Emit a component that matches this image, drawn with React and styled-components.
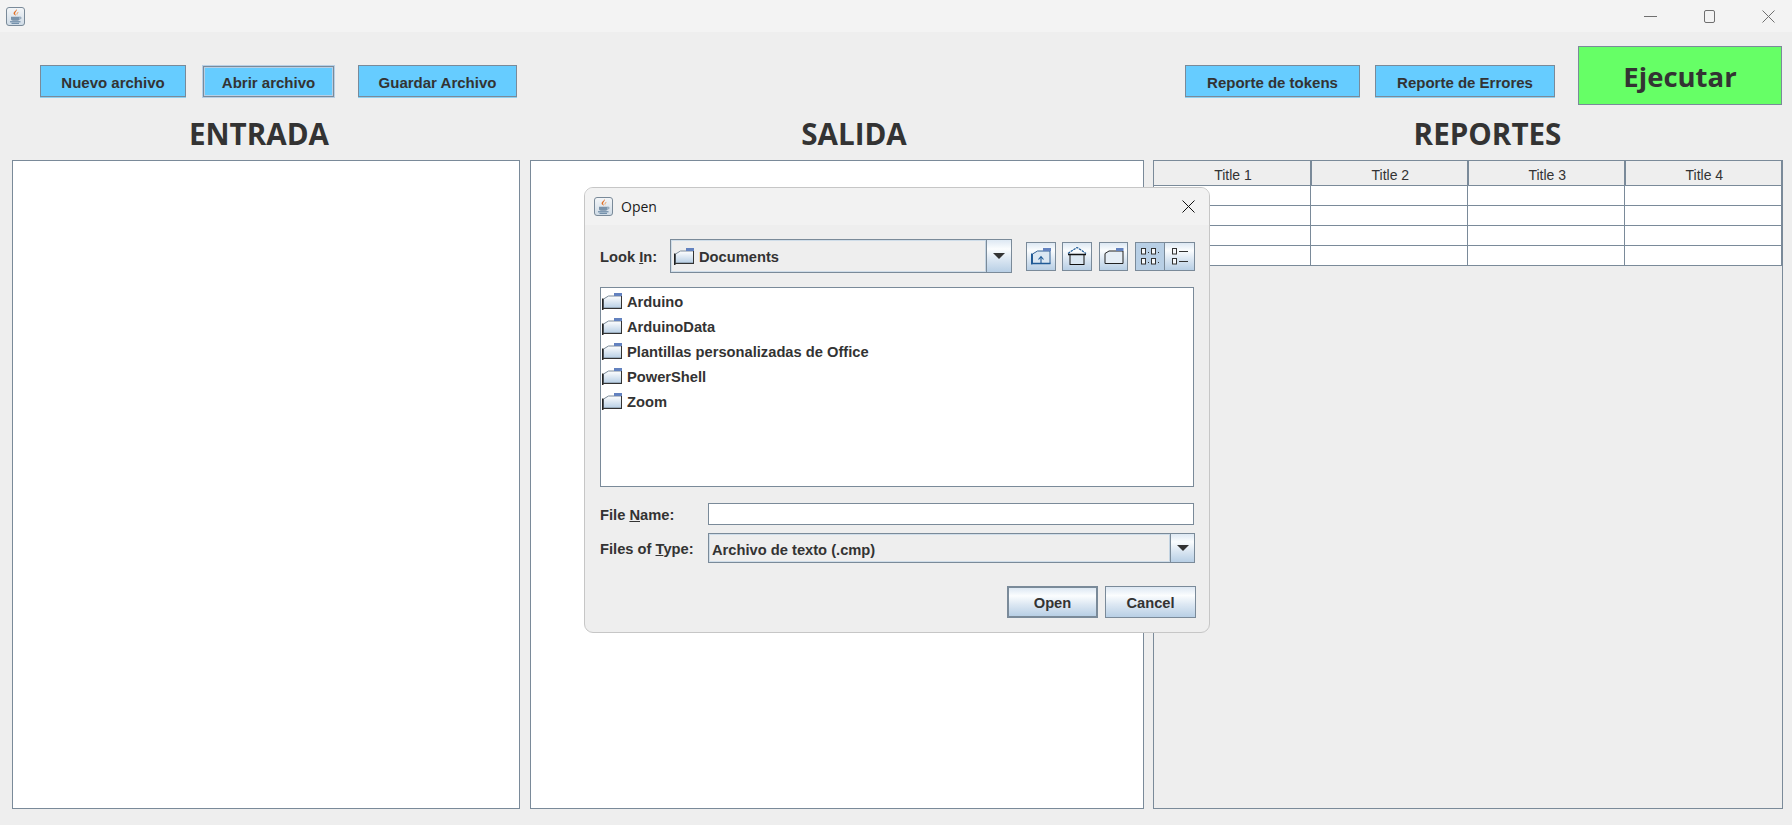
import React from "react";
import styled, { createGlobalStyle } from "styled-components";

const METAL = "#7a8a99";
const GLOSS = "linear-gradient(#dde8f3 0%, #fbfdfe 28%, #dde8f3 58%, #b8cfe5 100%)";

const GlobalStyle = createGlobalStyle`
  html, body {
    margin: 0;
    padding: 0;
    background: #eeeeee;
    overflow: hidden;
  }
  * { box-sizing: border-box; }
`;

const Window = styled.div`
  position: relative;
  width: 1792px;
  height: 825px;
  background: #eeeeee;
  font-family: "Liberation Sans", Arial, sans-serif;
  color: #333333;
`;

const TitleBar = styled.div`
  height: 32px;
  background: #f3f3f3;
  display: flex;
  align-items: center;
  justify-content: space-between;
  padding-left: 6px;
`;

const WindowControls = styled.div`
  display: flex;
  align-items: center;
  gap: 46px;
  padding-right: 17px;
`;

const Toolbar = styled.div`
  height: 73px;
  display: flex;
  align-items: flex-end;
  padding-left: 40px;
  padding-right: 10px;
`;

const ActionButton = styled.button`
  width: ${(p) => p.$w}px;
  height: ${(p) => (p.$focused ? 31 : 32)}px;
  margin-left: ${(p) => p.$gap || 0}px;
  margin-bottom: 8px;
  padding: 2px 0 0;
  background: #66ccff;
  border: 1px solid ${METAL};
  outline: ${(p) => (p.$focused ? "1px solid #b8cfe5" : "none")};
  box-shadow: ${(p) =>
    p.$focused ? "inset 0 0 0 1px #b8cfe5" : "0 1px 0 #8fd0f0"};
  font: bold 15px "Liberation Sans", Arial, sans-serif;
  color: #333333;
`;

const Spacer = styled.div`
  flex: 1;
`;

const RunButton = styled.button`
  width: 204px;
  height: 59px;
  margin-left: 23px;
  padding: 2px 0 0;
  background: #66ff66;
  border: 1px solid ${METAL};
  font: bold 27.5px "Open Sans", "Noto Sans", sans-serif;
  color: #333333;
`;

const Columns = styled.div`
  display: flex;
  padding-left: 12px;
`;

const Column = styled.section`
  width: ${(p) => p.$w}px;
  margin-left: ${(p) => p.$gap || 0}px;
  display: flex;
  flex-direction: column;
`;

const Heading = styled.h2`
  height: 55px;
  margin: 0;
  padding-left: ${(p) => p.$pl || 0}px;
  padding-right: ${(p) => p.$pr || 0}px;
  text-align: center;
  font: bold 29.6px/58px "Open Sans", "Noto Sans", sans-serif;
  color: #333333;
`;

const Panel = styled.div`
  height: 649px;
  background: ${(p) => (p.$grey ? "#eeeeee" : "#ffffff")};
  border: 1px solid ${METAL};
`;

const Table = styled.table`
  width: 628px;
  border-collapse: collapse;
  table-layout: fixed;
`;

const HeadCell = styled.th`
  height: 24px;
  padding: 4px 0 0 2px;
  background: #eeeeee;
  border-right: 2px solid ${METAL};
  border-bottom: 1px solid ${METAL};
  font: normal 14px "Liberation Sans", Arial, sans-serif;
  color: #333333;
  &:last-child { border-right: 1px solid ${METAL}; }
`;

const Cell = styled.td`
  height: 20px;
  padding: 0;
  background: #ffffff;
  border-right: 1px solid ${METAL};
  border-bottom: 1px solid ${METAL};
`;

const Dialog = styled.div`
  position: absolute;
  left: 584px;
  top: 187px;
  width: 626px;
  height: 446px;
  background: #eeeeee;
  border: 1px solid #c6c6c6;
  border-radius: 9px;
  overflow: hidden;
`;

const DialogTitle = styled.div`
  height: 37px;
  background: #f2f2f2;
  display: flex;
  align-items: center;
  padding: 0 14px 0 9px;
  gap: 8px;
  font: 14px "Open Sans", "Noto Sans", sans-serif;
  color: #1a1a1a;
`;

const DialogTitleText = styled.span`
  flex: 1;
`;

const DialogBody = styled.div`
  padding: 14px 14px 0 15px;
  font-weight: bold;
  font-size: 14.7px;
`;

const LookRow = styled.div`
  display: flex;
  align-items: center;
  height: 34px;
`;

const FieldLabel = styled.label`
  width: ${(p) => p.$w}px;
  flex: none;
  padding-top: 1px;
`;

const Combo = styled.div`
  width: ${(p) => p.$w}px;
  height: ${(p) => p.$h}px;
  display: flex;
  align-items: stretch;
  border: 1px solid ${METAL};
  background: #eeeeee;
`;

const ComboValue = styled.div`
  flex: 1;
  display: flex;
  align-items: center;
  gap: 5px;
  padding-left: 2px;
  padding-top: ${(p) => p.$pt}px;
  border: 1px solid #cfdde9;
  border-right: 1px solid #c4d4e2;
`;

const ComboArrow = styled.div`
  width: ${(p) => p.$w}px;
  display: flex;
  align-items: center;
  justify-content: center;
  background: ${GLOSS};
  border-left: 1px solid ${METAL};
  &::after {
    content: "";
    border-left: 6px solid transparent;
    border-right: 6px solid transparent;
    border-top: 6px solid #333333;
  }
`;

const ToolGroup = styled.div`
  display: flex;
  margin-left: ${(p) => p.$gap}px;
`;

const ToolButton = styled.div`
  width: ${(p) => p.$w || 30}px;
  height: 29px;
  display: flex;
  align-items: center;
  justify-content: center;
  border: 1px solid ${METAL};
  background: ${(p) => (p.$active ? "#b8cfe5" : GLOSS)};
  & + & { border-left-width: 0; }
`;

const FileList = styled.ul`
  width: 594px;
  height: 200px;
  margin: 14px 0 16px;
  padding: 1px 0 0 1px;
  list-style: none;
  background: #ffffff;
  border: 1px solid ${METAL};
`;

const FileRow = styled.li`
  height: 25px;
  display: flex;
  align-items: center;
  gap: 5px;
`;

const FormRow = styled.div`
  display: flex;
  align-items: center;
  margin-bottom: 8px;
`;

const TextInput = styled.input`
  width: 486px;
  height: 22px;
  background: #ffffff;
  border: 1px solid ${METAL};
  outline: none;
`;

const DialogActions = styled.div`
  display: flex;
  justify-content: flex-end;
  gap: 7px;
  width: 596px;
  margin-top: 23px;
`;

const DialogButton = styled.button`
  width: 91px;
  height: 32px;
  padding: 1px 0 0;
  background: ${GLOSS};
  border: ${(p) => (p.$default ? 2 : 1)}px solid ${METAL};
  font: bold 14.7px "Liberation Sans", Arial, sans-serif;
  color: #333333;
`;

const JavaIcon = () => (
  <svg width="19" height="19" viewBox="0 0 19 19">
    <defs>
      <linearGradient id="javaBg" x1="0" y1="0" x2="0" y2="1">
        <stop offset="0" stopColor="#f4f6f8" />
        <stop offset="1" stopColor="#cfdbe6" />
      </linearGradient>
    </defs>
    <rect x="0.5" y="0.5" width="18" height="18" rx="2.5" fill="url(#javaBg)" stroke="#7a8a99" />
    <path d="M10.500 2c1.300 2-2.200 3-1.200 5.300.3.700.9 1.400.9 1.400C8 8 6.900 6.700 7.900 5.200 8.700 4.100 10.300 3.400 10.500 2z" fill="#e0702a" />
    <path d="M12.500 4.800c.2 1.200-1.900 1.800-1.100 3.900-1.600-1.300-.8-3 1.100-3.900z" fill="#ec9a58" />
    <path d="M5 9.800h8.500v2.200c0 1-.9 1.700-1.900 1.700H6.900c-1 0-1.900-.7-1.900-1.700z" fill="#7b93aa" />
    <path d="M13.500 10.200h.9c.9 0 .9 1.800-.9 2" fill="none" stroke="#7b93aa" />
    <path d="M4 14.800h10.500M5.500 16.300h7.500" stroke="#5c7c9c" strokeWidth="1" />
  </svg>
);

const FolderIcon = () => (
  <svg width="20" height="17" viewBox="0 0 20 17">
    <defs>
      <linearGradient id="folderFill" x1="0" y1="0" x2="0" y2="1">
        <stop offset="0" stopColor="#ffffff" />
        <stop offset="1" stopColor="#b8cfe5" />
      </linearGradient>
    </defs>
    <path d="M1.500 6l5-3h13v12H1.500z" fill="url(#folderFill)" stroke="#7a8a99" />
    <rect x="12" y="0" width="8" height="3" fill="#6382bf" />
    <path d="M.75 5.500V17" stroke="#222222" strokeWidth="1.500" />
    <path d="M1 15.500h19" stroke="#333333" />
    <path d="M19.500 3v12.500" stroke="#333333" />
  </svg>
);

const UpFolderIcon = () => (
  <svg width="20" height="17" viewBox="0 0 20 17">
    <path d="M1.500 6l5-3h12.500v12.500H1.500z" fill="#dbe7f2" stroke="#2f5f93" />
    <rect x="12" y="0" width="8" height="3" fill="#6382bf" />
    <path d="M.75 5.500V16.500M1 15.500h18.500" stroke="#1f5a96" strokeWidth="1.500" />
    <path d="M10 15V9M7.500 11.500 10 8.500l2.500 3" fill="none" stroke="#1f5a96" strokeWidth="1.100" />
  </svg>
);

const HomeIcon = () => (
  <svg width="20" height="18" viewBox="0 0 20 18">
    <path d="M1 6.500 6 3l4-2.500L14 3l5 3.500" fill="none" stroke="#1f5a96" strokeWidth="1.200" strokeDasharray="2.500 .8" />
    <rect x="3" y="7.500" width="14" height="10" fill="#dbe7f2" stroke="#111111" />
    <path d="M1 7.500h18" stroke="#111111" strokeWidth="1.500" />
  </svg>
);

const NewFolderIcon = () => (
  <svg width="20" height="17" viewBox="0 0 20 17">
    <path d="M1 5.500l4-2.500h14v12.500H1z" fill="#e6eef6" stroke="#222222" />
    <rect x="12" y="0" width="7.500" height="3" fill="#6382bf" />
  </svg>
);

const ListViewIcon = () => (
  <svg width="20" height="20" viewBox="0 0 20 20" fill="none" stroke="#333333">
    <rect x="1.500" y="2.500" width="4" height="5.500" fill="#f6f9fc" />
    <rect x="11.500" y="2.500" width="4" height="5.500" fill="#f6f9fc" />
    <rect x="1.500" y="12.500" width="4" height="5.500" fill="#f6f9fc" />
    <rect x="11.500" y="12.500" width="4" height="5.500" fill="#f6f9fc" />
    <path d="M8 6.500h1M18 6.500h1M8 16.500h1M18 16.500h1" />
  </svg>
);

const DetailViewIcon = () => (
  <svg width="20" height="20" viewBox="0 0 20 20" fill="none" stroke="#333333">
    <rect x="2.500" y="2.500" width="4" height="5.500" fill="#f6f9fc" />
    <rect x="2.500" y="12.500" width="4" height="5.500" fill="#f6f9fc" />
    <path d="M9 5.500h9M9 15.500h9" />
  </svg>
);

const MinimizeGlyph = () => (
  <svg width="13" height="13" viewBox="0 0 13 13" stroke="#6f6f6f" fill="none">
    <path d="M0 6.500h13" />
  </svg>
);

const MaximizeGlyph = () => (
  <svg width="13" height="13" viewBox="0 0 13 13" stroke="#6f6f6f" fill="none">
    <rect x="1.500" y="0.500" width="10" height="12" rx="1.500" />
  </svg>
);

const CloseGlyph = ({ color = "#6f6f6f" }) => (
  <svg width="13" height="13" viewBox="0 0 13 13" stroke={color} fill="none">
    <path d="M.5.500l12 12M12.500.500l-12 12" />
  </svg>
);

const titles = ["Title 1", "Title 2", "Title 3", "Title 4"];
const folders = ["Arduino", "ArduinoData", "Plantillas personalizadas de Office", "PowerShell", "Zoom"];

export default function App() {
  return (
    <Window>
      <GlobalStyle />
      <TitleBar>
        <JavaIcon />
        <WindowControls>
          <MinimizeGlyph />
          <MaximizeGlyph />
          <CloseGlyph />
        </WindowControls>
      </TitleBar>

      <Toolbar>
        <ActionButton $w={146}>Nuevo archivo</ActionButton>
        <ActionButton $w={131} $gap={17} $focused>Abrir archivo</ActionButton>
        <ActionButton $w={159} $gap={24}>Guardar Archivo</ActionButton>
        <Spacer />
        <ActionButton $w={175}>Reporte de tokens</ActionButton>
        <ActionButton $w={180} $gap={15}>Reporte de Errores</ActionButton>
        <RunButton>Ejecutar</RunButton>
      </Toolbar>

      <Columns>
        <Column $w={508}>
          <Heading $pr={14}>ENTRADA</Heading>
          <Panel />
        </Column>
        <Column $w={614} $gap={10}>
          <Heading $pl={34}>SALIDA</Heading>
          <Panel />
        </Column>
        <Column $w={630} $gap={9}>
          <Heading $pl={39}>REPORTES</Heading>
          <Panel $grey>
            <Table>
              <thead>
                <tr>
                  {titles.map((t) => (
                    <HeadCell key={t}>{t}</HeadCell>
                  ))}
                </tr>
              </thead>
              <tbody>
                {[0, 1, 2, 3].map((r) => (
                  <tr key={r}>
                    {titles.map((t) => (
                      <Cell key={t} />
                    ))}
                  </tr>
                ))}
              </tbody>
            </Table>
          </Panel>
        </Column>
      </Columns>

      <Dialog>
        <DialogTitle>
          <JavaIcon />
          <DialogTitleText>Open</DialogTitleText>
          <CloseGlyph color="#111111" />
        </DialogTitle>
        <DialogBody>
          <LookRow>
            <FieldLabel $w={70}>Look <u>I</u>n:</FieldLabel>
            <Combo $w={344} $h={34}>
              <ComboValue $pt={1}>
                <FolderIcon />
                Documents
              </ComboValue>
              <ComboArrow $w={25} />
            </Combo>
            <ToolGroup $gap={14}>
              <ToolButton><UpFolderIcon /></ToolButton>
            </ToolGroup>
            <ToolGroup $gap={6}>
              <ToolButton><HomeIcon /></ToolButton>
            </ToolGroup>
            <ToolGroup $gap={7}>
              <ToolButton $w={29}><NewFolderIcon /></ToolButton>
            </ToolGroup>
            <ToolGroup $gap={7}>
              <ToolButton $active><ListViewIcon /></ToolButton>
              <ToolButton><DetailViewIcon /></ToolButton>
            </ToolGroup>
          </LookRow>

          <FileList>
            {folders.map((name) => (
              <FileRow key={name}>
                <FolderIcon />
                {name}
              </FileRow>
            ))}
          </FileList>

          <FormRow>
            <FieldLabel $w={108}>File <u>N</u>ame:</FieldLabel>
            <TextInput />
          </FormRow>
          <FormRow>
            <FieldLabel $w={108}>Files of <u>T</u>ype:</FieldLabel>
            <Combo $w={488} $h={30}>
              <ComboValue $pt={3}>Archivo de texto (.cmp)</ComboValue>
              <ComboArrow $w={24} />
            </Combo>
          </FormRow>

          <DialogActions>
            <DialogButton $default>Open</DialogButton>
            <DialogButton>Cancel</DialogButton>
          </DialogActions>
        </DialogBody>
      </Dialog>
    </Window>
  );
}
